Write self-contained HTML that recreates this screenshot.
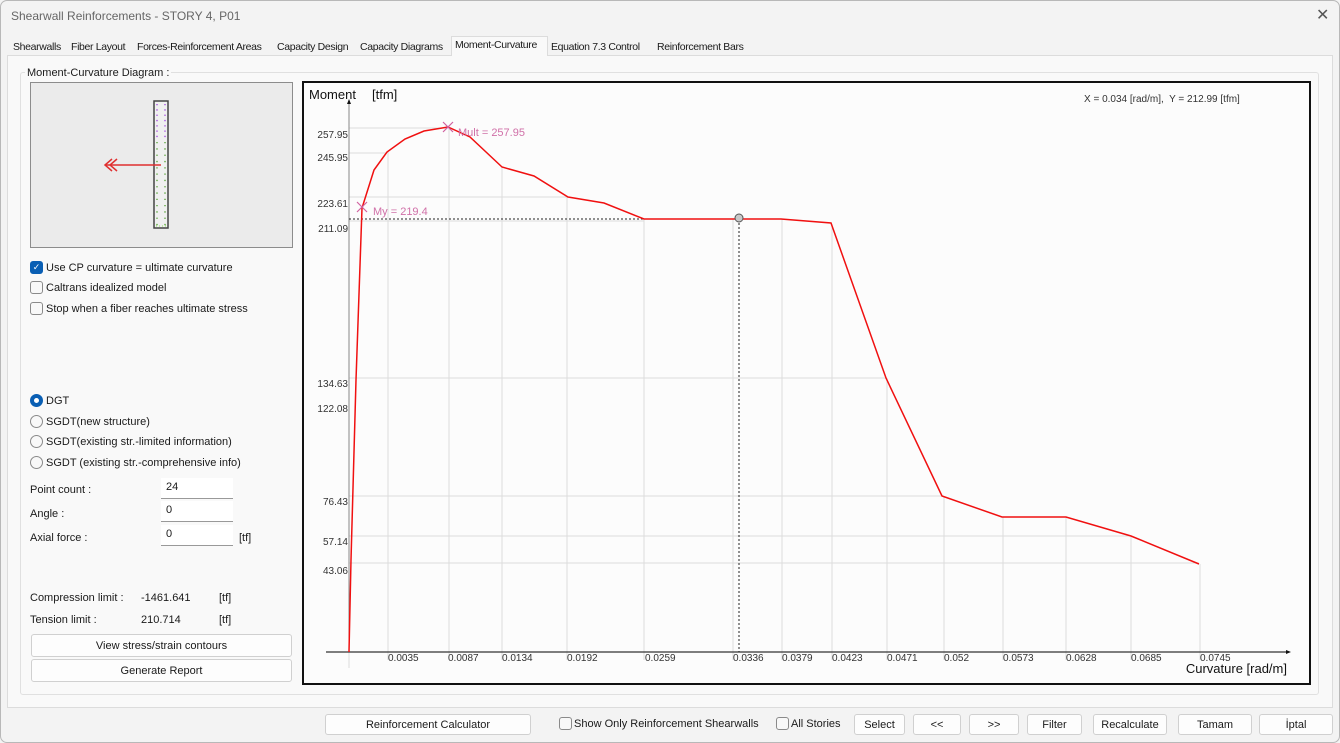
<!DOCTYPE html>
<html><head><meta charset="utf-8"><style>
*{box-sizing:border-box;margin:0;padding:0}
body{width:1340px;height:743px;background:#f3f3f3;font-family:"Liberation Sans",sans-serif;font-size:11px;color:#1a1a1a;position:relative;overflow:hidden}
.a{position:absolute;white-space:nowrap}
.btn{position:absolute;background:#fdfdfd;border:1px solid #d0d0d0;border-radius:3px;text-align:center;font-size:11px;line-height:20px}
.cb{position:absolute;width:13px;height:13px;border:1px solid #8a8a8a;border-radius:3px;background:#f8f8f8}
.rb{position:absolute;width:13px;height:13px;border:1px solid #8a8a8a;border-radius:50%;background:#f8f8f8}
.inp{position:absolute;background:#fff;border-bottom:1px solid #999;height:21px;width:72px;padding:3px 5px}
.tab{position:absolute;top:39px;height:18px;line-height:17px;padding:0 3px;font-size:10.5px;letter-spacing:-0.35px}
</style></head><body>
<div class="a" style="left:0;top:0;width:1340px;height:743px;border:1px solid #b8b8b8;border-radius:7px"></div>
<div class="a" style="left:11px;top:9px;font-size:12px;color:#666">Shearwall Reinforcements - STORY 4, P01</div>
<div class="a" style="left:1316px;top:5px;font-size:16px;color:#555">✕</div>
<div class="a" style="left:7px;top:55px;width:1326px;height:653px;background:#f9f9f9;border:1px solid #dcdcdc"></div>
<div class="tab" style="left:10px">Shearwalls</div>
<div class="tab" style="left:68px">Fiber Layout</div>
<div class="tab" style="left:134px">Forces-Reinforcement Areas</div>
<div class="tab" style="left:274px">Capacity Design</div>
<div class="tab" style="left:357px">Capacity Diagrams</div>
<div class="tab" style="left:451px;top:36px;background:#f9f9f9;border:1px solid #dcdcdc;border-bottom:none;height:20px;width:97px">Moment-Curvature</div>
<div class="tab" style="left:548px">Equation 7.3 Control</div>
<div class="tab" style="left:654px">Reinforcement Bars</div>
<div class="a" style="left:20px;top:72px;width:1299px;height:623px;border:1px solid #e0e0e0;border-radius:3px"></div>
<div class="a" style="left:25px;top:67px;background:#f9f9f9;padding:0 2px">Moment-Curvature Diagram :</div>
<div class="a" style="left:30px;top:82px;width:263px;height:166px;background:#ebebeb;border:1px solid #8c8c8c"></div>
<svg class="a" style="left:0;top:0" width="1340" height="743">
<rect x="154" y="101" width="14" height="127" fill="#f0f0f0" stroke="#444" stroke-width="1.5"/>
<line x1="157" y1="104" x2="157" y2="140" stroke="#a040e0" stroke-width="1.3" stroke-dasharray="1.3 4"/>
<line x1="165" y1="104" x2="165" y2="140" stroke="#a040e0" stroke-width="1.3" stroke-dasharray="1.3 4"/>
<line x1="157" y1="142" x2="157" y2="226" stroke="#50a030" stroke-width="1.3" stroke-dasharray="1.3 5"/>
<line x1="165" y1="142" x2="165" y2="226" stroke="#50a030" stroke-width="1.3" stroke-dasharray="1.3 5"/>
<line x1="156" y1="226" x2="166" y2="226" stroke="#90e060" stroke-dasharray="1 2"/>
<line x1="106" y1="165" x2="161" y2="165" stroke="#e03030" stroke-width="1.5"/>
<path d="M112 159 L105 165 L112 171 M117 159 L110 165 L117 171" stroke="#e03030" fill="none" stroke-width="1.5"/>
</svg>
<div class="cb" style="left:30px;top:261px;background:#0a5fb4;border-color:#0a5fb4;color:#fff;font-size:9px;line-height:11px;text-align:center">✓</div>
<div class="a" style="left:46px;top:262px">Use CP curvature = ultimate curvature</div>
<div class="cb" style="left:30px;top:281px"></div>
<div class="a" style="left:46px;top:282px">Caltrans idealized model</div>
<div class="cb" style="left:30px;top:302px"></div>
<div class="a" style="left:46px;top:303px">Stop when a fiber reaches ultimate stress</div>
<div class="rb" style="left:30px;top:394px;border:4px solid #0a5fb4;background:#fff"></div>
<div class="a" style="left:46px;top:395px">DGT</div>
<div class="rb" style="left:30px;top:415px"></div>
<div class="a" style="left:46px;top:416px">SGDT(new structure)</div>
<div class="rb" style="left:30px;top:435px"></div>
<div class="a" style="left:46px;top:436px">SGDT(existing str.-limited information)</div>
<div class="rb" style="left:30px;top:456px"></div>
<div class="a" style="left:46px;top:457px">SGDT (existing str.-comprehensive info)</div>
<div class="a" style="left:30px;top:484px">Point count :</div>
<div class="inp" style="left:161px;top:478px">24</div>
<div class="a" style="left:30px;top:508px">Angle :</div>
<div class="inp" style="left:161px;top:501px">0</div>
<div class="a" style="left:30px;top:532px">Axial force :</div>
<div class="inp" style="left:161px;top:525px">0</div>
<div class="a" style="left:239px;top:532px">[tf]</div>
<div class="a" style="left:30px;top:592px">Compression limit :</div>
<div class="a" style="left:141px;top:592px">-1461.641</div>
<div class="a" style="left:219px;top:592px">[tf]</div>
<div class="a" style="left:30px;top:614px">Tension limit :</div>
<div class="a" style="left:141px;top:614px">210.714</div>
<div class="a" style="left:219px;top:614px">[tf]</div>
<div class="btn" style="left:31px;top:634px;width:261px;height:23px;line-height:22px">View stress/strain contours</div>
<div class="btn" style="left:31px;top:659px;width:261px;height:23px;line-height:22px">Generate Report</div>
<div class="a" style="left:302px;top:81px;width:1009px;height:604px;background:#fcfcfc;border:2px solid #111"></div>
<svg class="a" style="left:0;top:0;font-family:'Liberation Sans',sans-serif" width="1340" height="743">
<g stroke="#dcdcdc" stroke-width="1">
<line x1="388" y1="660" x2="388" y2="151"/><line x1="449" y1="660" x2="449" y2="127"/>
<line x1="502" y1="660" x2="502" y2="167"/><line x1="567" y1="660" x2="567" y2="197"/>
<line x1="644" y1="660" x2="644" y2="219"/><line x1="733" y1="660" x2="733" y2="219"/>
<line x1="782" y1="660" x2="782" y2="219"/><line x1="832" y1="660" x2="832" y2="224"/>
<line x1="887" y1="660" x2="887" y2="378"/><line x1="944" y1="660" x2="944" y2="496"/>
<line x1="1003" y1="660" x2="1003" y2="517"/><line x1="1066" y1="660" x2="1066" y2="517"/>
<line x1="1131" y1="660" x2="1131" y2="536"/><line x1="1200" y1="660" x2="1200" y2="564"/>
<line x1="349" y1="128" x2="448" y2="128"/><line x1="349" y1="153" x2="387" y2="153"/>
<line x1="349" y1="197" x2="568" y2="197"/><line x1="349" y1="221" x2="644" y2="221"/>
<line x1="349" y1="378" x2="886" y2="378"/><line x1="349" y1="496" x2="942" y2="496"/>
<line x1="349" y1="536" x2="1131" y2="536"/><line x1="349" y1="563" x2="1199" y2="563"/>
<line x1="349" y1="652" x2="349" y2="668"/>
</g>
<line x1="349" y1="652" x2="349" y2="103" stroke="#888"/>
<path d="M347 104 L349 99 L351 104Z" fill="#111"/>
<line x1="326" y1="652" x2="1288" y2="652" stroke="#333" stroke-width="1.2"/>
<path d="M1286 650 L1291 652 L1286 654Z" fill="#111"/>
<line x1="349" y1="219" x2="644" y2="219" stroke="#222" stroke-dasharray="2 2"/>
<line x1="739" y1="223" x2="739" y2="652" stroke="#222" stroke-dasharray="2 2"/>
<polyline fill="none" stroke="#f01010" stroke-width="1.5" points="349,652 351,560 356,380 362,208 374,170 387,152 405,139 424,131 448,127 470,137 502,167 534,176 568,197 604,203 644,219 781,219 831,223 886,378 942,496 1002,517 1066,517 1131,536 1199,564"/>
<circle cx="739" cy="218" r="4" fill="#c8c8c8" stroke="#555"/>
<path d="M443 122 L453 132 M453 122 L443 132 M357 202 L367 212 M367 202 L357 212" stroke="#d060a0" stroke-width="1.2"/>
<text x="458" y="136" fill="#d070a8" font-size="11">Mult = 257.95</text>
<text x="373" y="215" fill="#d070a8" font-size="11">My = 219.4</text>
<text x="309" y="99" font-size="13" fill="#111">Moment</text>
<text x="372" y="99" font-size="13" fill="#111">[tfm]</text>
<text x="1084" y="102" font-size="10" fill="#333" xml:space="preserve">X = 0.034 [rad/m],  Y = 212.99 [tfm]</text>
<g font-size="10" fill="#333" text-anchor="end">
<text x="348" y="138">257.95</text><text x="348" y="161">245.95</text><text x="348" y="207">223.61</text>
<text x="348" y="232">211.09</text><text x="348" y="387">134.63</text><text x="348" y="412">122.08</text>
<text x="348" y="505">76.43</text><text x="348" y="545">57.14</text><text x="348" y="574">43.06</text>
</g>
<g font-size="10" fill="#333">
<text x="388" y="661">0.0035</text><text x="448" y="661">0.0087</text><text x="502" y="661">0.0134</text>
<text x="567" y="661">0.0192</text><text x="645" y="661">0.0259</text><text x="733" y="661">0.0336</text>
<text x="782" y="661">0.0379</text><text x="832" y="661">0.0423</text><text x="887" y="661">0.0471</text>
<text x="944" y="661">0.052</text><text x="1003" y="661">0.0573</text><text x="1066" y="661">0.0628</text>
<text x="1131" y="661">0.0685</text><text x="1200" y="661">0.0745</text>
</g>
<text x="1287" y="673" font-size="13" fill="#111" text-anchor="end">Curvature [rad/m]</text>
</svg>
<div class="btn" style="left:325px;top:714px;width:206px;height:21px">Reinforcement Calculator</div>
<div class="cb" style="left:559px;top:717px"></div>
<div class="a" style="left:574px;top:718px">Show Only Reinforcement Shearwalls</div>
<div class="cb" style="left:776px;top:717px"></div>
<div class="a" style="left:791px;top:718px">All Stories</div>
<div class="btn" style="left:854px;top:714px;width:51px;height:21px">Select</div>
<div class="btn" style="left:913px;top:714px;width:48px;height:21px">&lt;&lt;</div>
<div class="btn" style="left:969px;top:714px;width:50px;height:21px">&gt;&gt;</div>
<div class="btn" style="left:1027px;top:714px;width:55px;height:21px">Filter</div>
<div class="btn" style="left:1093px;top:714px;width:74px;height:21px">Recalculate</div>
<div class="btn" style="left:1178px;top:714px;width:74px;height:21px">Tamam</div>
<div class="btn" style="left:1259px;top:714px;width:74px;height:21px">İptal</div>
</body></html>
